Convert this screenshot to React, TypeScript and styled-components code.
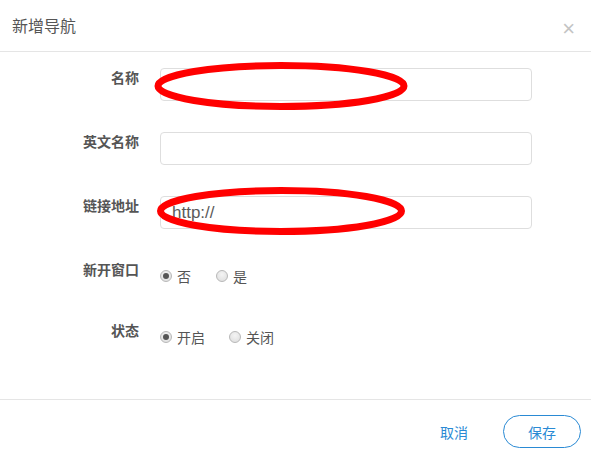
import styled, {createGlobalStyle} from "styled-components";

const GlobalStyle = createGlobalStyle`
  body {
    margin: 0;
    background: #fff;
    font-family: "Liberation Sans", "Noto Sans CJK SC", sans-serif;
  }
`;

const Dialog = styled.div`
  position: relative;
  width: 591px;
  height: 452px;
  display: flex;
  flex-direction: column;
  background: #fff;
`;

const Header = styled.div`
  height: 52px;
  border-bottom: 1px solid #e5e5e5;
  display: flex;
  align-items: center;
  justify-content: space-between;
  padding: 0 16px 0 12px;
  box-sizing: border-box;
`;

const Title = styled.h3`
  margin: 0;
  font-size: 16px;
  font-weight: normal;
  color: #555;
  padding-bottom: 2px;
`;

const Close = styled.span`
  font-size: 22px;
  color: #c4c4c4;
  line-height: 1;
  margin-top: 6px;
`;

const Form = styled.form`
  flex: 1;
  padding-top: 16px;
  display: flex;
  flex-direction: column;
`;

const Row = styled.div<{ $h: number; $mb: number }>`
  display: grid;
  grid-template-columns: 139px 372px;
  column-gap: 21px;
  height: ${p => p.$h}px;
  margin-bottom: ${p => p.$mb}px;
  align-items: start;
`;

const Label = styled.label`
  text-align: right;
  font-size: 14px;
  font-weight: bold;
  line-height: 20px;
  color: #555;
`;

const Input = styled.input`
  box-sizing: border-box;
  width: 372px;
  height: 33px;
  border: 1px solid #dedede;
  border-radius: 4px;
  padding: 0 11px;
  font-size: 17px;
  font-family: "Liberation Sans", "Noto Sans CJK SC", sans-serif;
  color: #5a5a5a;
  outline: none;
`;

const Options = styled.div<{ $gap: number }>`
  display: flex;
  align-items: center;
  gap: ${p => p.$gap}px;
  height: 32px;
`;

const Option = styled.span`
  display: flex;
  align-items: center;
  gap: 5px;
  font-size: 14px;
  color: #555;
`;

const Radio = styled.span<{ $on?: boolean }>`
  box-sizing: border-box;
  width: 12px;
  height: 12px;
  border-radius: 50%;
  border: 1px solid #b8b8b8;
  background: radial-gradient(circle at 50% 35%, #f4f4f4, #dcdcdc);
  display: flex;
  align-items: center;
  justify-content: center;

  &::after {
    content: "";
    display: ${p => (p.$on ? "block" : "none")};
    width: 6px;
    height: 6px;
    border-radius: 50%;
    background: #555;
  }
`;

const Footer = styled.div`
  height: 53px;
  box-sizing: border-box;
  border-top: 1px solid #e5e5e5;
  display: flex;
  align-items: flex-start;
  justify-content: flex-end;
  gap: 35px;
  padding: 15px 10px 0 0;
`;

const TextButton = styled.button`
  border: none;
  background: none;
  font-size: 14px;
  color: #2a8ad4;
  font-family: inherit;
  padding: 0;
  height: 33px;
  cursor: pointer;
`;

const OutlineButton = styled.button`
  width: 78px;
  height: 33px;
  border: 1px solid #2a8ad4;
  border-radius: 17px;
  background: #fff;
  font-size: 14px;
  color: #2a8ad4;
  font-family: inherit;
  cursor: pointer;
`;

const Marks = styled.svg`
  position: absolute;
  left: 0;
  top: 0;
  pointer-events: none;
`;

export default function App() {
    return (
        <>
            <GlobalStyle/>
            <Dialog>
                <Header>
                    <Title>新增导航</Title>
                    <Close>×</Close>
                </Header>
                <Form>
                    <Row $h={33} $mb={31}>
                        <Label>名称</Label>
                        <Input/>
                    </Row>
                    <Row $h={33} $mb={31}>
                        <Label>英文名称</Label>
                        <Input/>
                    </Row>
                    <Row $h={33} $mb={31}>
                        <Label>链接地址</Label>
                        <Input defaultValue="http://"/>
                    </Row>
                    <Row $h={30} $mb={31}>
                        <Label>新开窗口</Label>
                        <Options $gap={25}>
                            <Option><Radio $on/>否</Option>
                            <Option><Radio/>是</Option>
                        </Options>
                    </Row>
                    <Row $h={30} $mb={0}>
                        <Label>状态</Label>
                        <Options $gap={24}>
                            <Option><Radio $on/>开启</Option>
                            <Option><Radio/>关闭</Option>
                        </Options>
                    </Row>
                </Form>
                <Footer>
                    <TextButton>取消</TextButton>
                    <OutlineButton>保存</OutlineButton>
                </Footer>
                <Marks width="591" height="452">
                    <ellipse cx="281" cy="86" rx="123" ry="20.5" fill="none" stroke="#f00" strokeWidth="7"/>
                    <ellipse cx="281" cy="211" rx="120.5" ry="20.5" fill="none" stroke="#f00" strokeWidth="7"/>
                </Marks>
            </Dialog>
        </>
    )
}
